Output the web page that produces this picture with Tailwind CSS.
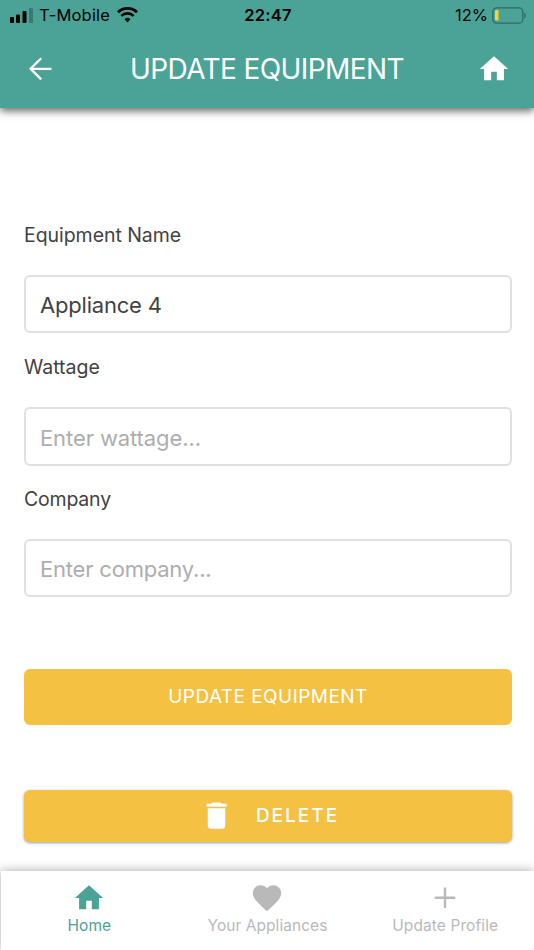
<!DOCTYPE html>
<html lang="en">
  <head>
    <meta charset="UTF-8" />
    <meta name="viewport" content="width=device-width, initial-scale=1.0" />
    <title>Update Equipment</title>
    <script src="https://cdn.jsdelivr.net/npm/@tailwindcss/browser@4"></script>
  </head>
  <body class="bg-white font-['Inter',sans-serif]">
    <div class="flex h-[950px] w-[534px] flex-col overflow-hidden">
      <!-- Header -->
      <header class="h-[108px] shrink-0 bg-[#4ba397] shadow-[0_3px_8px_rgba(0,0,0,0.6)]">
        <!-- Status bar -->
        <div class="grid h-[30px] grid-cols-3 items-center pl-[10px] pr-2 text-black">
          <div class="flex items-center">
            <svg class="h-[15px] w-[23px]" viewBox="0 0 23 15" fill="currentColor">
              <rect x="0" y="9" width="4" height="6" rx="1" />
              <rect x="6" y="6.500" width="4" height="8.500" rx="1" />
              <rect x="12.500" y="3" width="4" height="12" rx="1" />
              <rect x="19" y="0" width="4" height="15" rx="1" opacity="0.25" />
            </svg>
            <span class="ml-[6px] whitespace-nowrap text-[16.500px] leading-[30px] tracking-[0.2px]">T-Mobile</span>
            <svg class="ml-[7px] h-[16px] w-[21px]" viewBox="0 0 21 16" fill="none" stroke="currentColor">
              <path d="M1 5.200a13.800 13.800 0 0 1 19 0" stroke-width="2.800" />
              <path d="M4.300 8.900a9 9 0 0 1 12.400 0" stroke-width="2.600" />
              <path d="M10.500 15.500l-3-3.200a4.300 4.300 0 0 1 6 0z" fill="currentColor" stroke="none" />
            </svg>
          </div>
          <div class="text-center text-[16.500px] leading-[30px] font-semibold tracking-[0.2px]">22:47</div>
          <div class="flex items-center justify-end">
            <span class="text-[16.500px] leading-[30px]">12%</span>
            <svg class="ml-[4px] h-[17px] w-[34px]" viewBox="0 0 34 17">
              <rect x="0.800" y="0.800" width="30" height="15.400" rx="4" fill="none" stroke="#2f6b62" stroke-width="1.300" />
              <rect x="3" y="3" width="3.500" height="10.500" rx="1.200" fill="#fbd12f" />
              <path d="M32.300 5.500c2 1 2 5 0 6z" fill="#2f6b62" />
            </svg>
          </div>
        </div>
        <!-- Title bar -->
        <div class="flex h-[78px] items-center justify-between pl-[23px] pr-[23px]">
          <svg class="h-[34px] w-[34px] text-white" viewBox="0 0 34 34" fill="none" stroke="currentColor" stroke-width="2.300">
            <path d="M28.500 16.800H7.500M18.200 6.300L7.600 16.800l10.600 10.600" />
          </svg>
          <h1 class="whitespace-nowrap text-[28px] leading-[34px] tracking-[-0.6px] text-white">UPDATE EQUIPMENT</h1>
          <svg class="h-[34px] w-[34px] text-white" viewBox="0 0 24 24" fill="currentColor">
            <path d="M10 20v-6h4v6h5v-8h3L12 3 2 12h3v8z" />
          </svg>
        </div>
      </header>

      <!-- Form -->
      <main class="flex-1 pt-[111px] pl-6 pr-[22px]">
        <div class="h-[132px]">
          <label for="name" class="block h-[56px] text-[19.500px] leading-[32px] tracking-[-0.05px] text-[#424242]">Equipment Name</label>
          <input id="name" type="text" value="Appliance 4" class="block h-[58px] w-full rounded-[6px] border-2 border-[#e0e0e0] px-[14px] pt-[2px] text-[22px] tracking-[-0.2px] text-[#424242]" />
        </div>
        <div class="h-[132px]">
          <label for="wattage" class="block h-[56px] text-[19.500px] leading-[32px] text-[#424242]">Wattage</label>
          <input id="wattage" type="text" placeholder="Enter wattage..." class="block h-[59px] w-full rounded-[6px] border-2 border-[#e0e0e0] px-[14px] pt-[3px] text-[22px] tracking-[-0.1px] placeholder:text-[#adadad]" />
        </div>
        <div class="h-[132px]">
          <label for="company" class="block h-[56px] text-[19.500px] leading-[32px] tracking-[-0.2px] text-[#424242]">Company</label>
          <input id="company" type="text" placeholder="Enter company..." class="block h-[58px] w-full rounded-[6px] border-2 border-[#e0e0e0] px-[14px] pt-[2px] text-[22px] tracking-[-0.2px] placeholder:text-[#adadad]" />
        </div>

        <button class="mt-[54px] block h-[56px] w-full rounded-[6px] bg-[#f5c142] text-[19px] tracking-[0.45px] text-white">UPDATE EQUIPMENT</button>
        <button class="mt-[65px] flex h-[52px] w-full items-center justify-center rounded-[6px] bg-[#f5c142] pl-[2px] text-white shadow-[0_1px_3px_rgba(0,0,0,0.4)]">
          <svg class="mb-[2px] h-[35px] w-[35px]" viewBox="0 0 24 24" fill="currentColor">
            <path d="M6 19c0 1.100.9 2 2 2h8c1.100 0 2-.9 2-2V7H6v12zM19 4h-3.500l-1-1h-5l-1 1H5v2h14V4z" />
          </svg>
          <span class="ml-[22px] text-[19px] font-medium tracking-[2px]">DELETE</span>
        </button>
      </main>

      <!-- Bottom tabs -->
      <nav class="ml-px grid h-[79px] shrink-0 grid-cols-3 bg-white text-[15.500px] text-[#b9b9b9] shadow-[0_0_10px_rgba(0,0,0,0.35)]">
        <a href="#" class="flex flex-col items-center pt-[10px] pr-px text-[#4ba397]">
          <svg class="h-[34px] w-[34px]" viewBox="0 0 24 24" fill="currentColor">
            <path d="M10 20v-6h4v6h5v-8h3L12 3 2 12h3v8z" />
          </svg>
          <span class="leading-[22px] tracking-[0.1px]">Home</span>
        </a>
        <a href="#" class="flex flex-col items-center pt-[10px]">
          <svg class="h-[34px] w-[34px]" viewBox="0 0 24 24" fill="currentColor">
            <path d="M12 21.350l-1.450-1.320C5.400 15.360 2 12.280 2 8.500 2 5.420 4.420 3 7.500 3c1.740 0 3.410.81 4.500 2.090C13.090 3.810 14.760 3 16.500 3 19.580 3 22 5.420 22 8.500c0 3.780-3.400 6.860-8.550 11.540L12 21.350z" />
          </svg>
          <span class="leading-[22px] tracking-[0.05px]">Your Appliances</span>
        </a>
        <a href="#" class="flex flex-col items-center pt-[10px]">
          <svg class="h-[34px] w-[34px]" viewBox="0 0 34 34" fill="none" stroke="currentColor" stroke-width="2.400">
            <path d="M17 6.500v20.500M6.800 16.700h20.400" />
          </svg>
          <span class="leading-[22px] tracking-[0.1px]">Update Profile</span>
        </a>
      </nav>
    </div>
  </body>
</html>
